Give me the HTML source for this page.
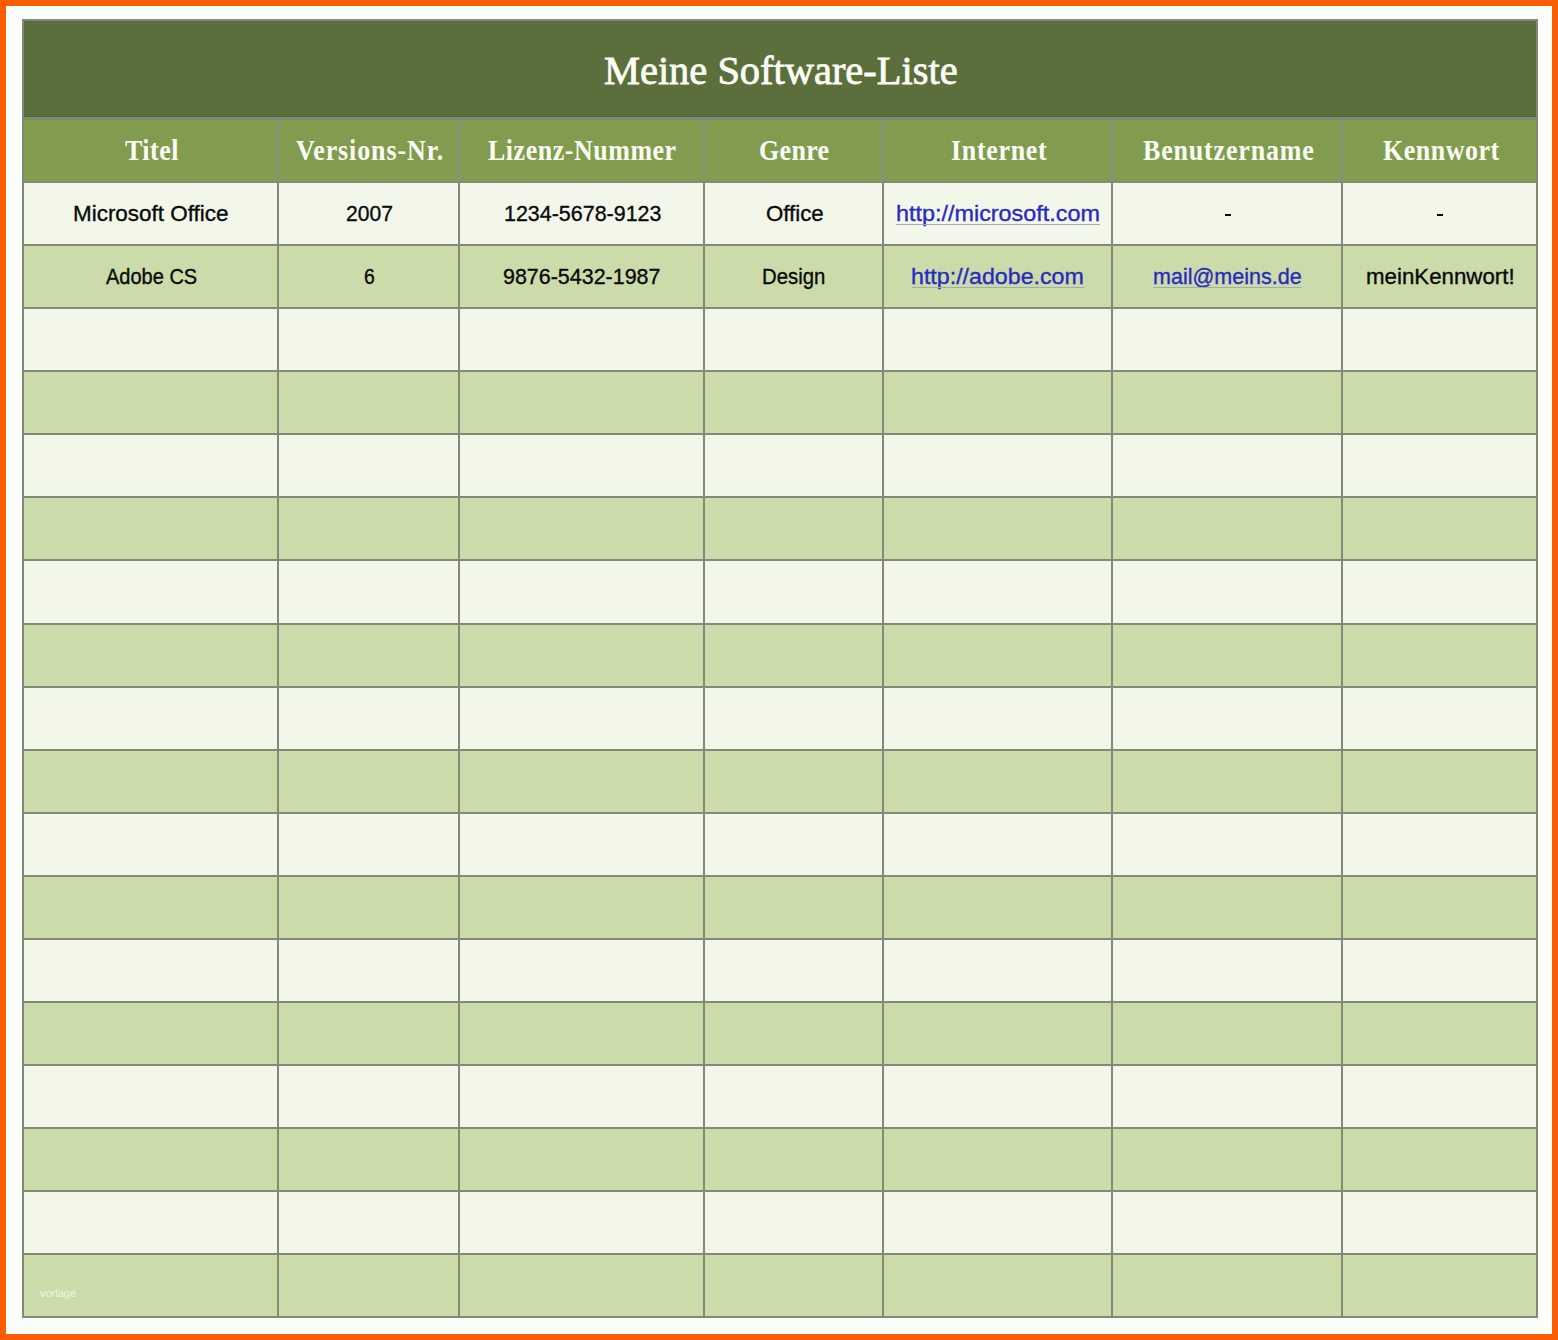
<!DOCTYPE html>
<html><head><meta charset="utf-8">
<style>
html,body{margin:0;padding:0;}
body{width:1558px;height:1340px;position:relative;overflow:hidden;background:#fb5d07;}
div{position:absolute;}
.tt{font-family:"Liberation Serif",serif;color:#fbfdf4;white-space:nowrap;transform-origin:0 0;-webkit-text-stroke:0.8px #fbfdf4;}
.ht{font-family:"Liberation Serif",serif;font-weight:bold;color:#fbfdf4;white-space:nowrap;transform-origin:0 0;-webkit-text-stroke:0px #fbfdf4;}
.dt,.dl{font-family:"Liberation Sans",sans-serif;color:#0a0a0a;white-space:nowrap;transform-origin:0 0;-webkit-text-stroke:0.35px currentColor;}
.dl{color:#2a2ac0;}
.u{position:absolute;height:1px;background:#a4abad;}
</style></head><body>

<div style="left:6px;top:6px;width:1546px;height:1328px;background:#fbfdf9"></div>
<div style="left:22px;top:19px;width:1516px;height:99px;background:#5b6f3d"></div>
<div style="left:22px;top:117px;width:1516px;height:65px;background:#819c4e"></div>
<div style="left:22px;top:181px;width:1516px;height:63px;background:#f2f7ea"></div>
<div style="left:22px;top:244px;width:1516px;height:63px;background:#cbdcaa"></div>
<div style="left:22px;top:307px;width:1516px;height:63px;background:#f2f7ea"></div>
<div style="left:22px;top:370px;width:1516px;height:63px;background:#cbdcaa"></div>
<div style="left:22px;top:433px;width:1516px;height:63px;background:#f2f7ea"></div>
<div style="left:22px;top:496px;width:1516px;height:63px;background:#cbdcaa"></div>
<div style="left:22px;top:559px;width:1516px;height:64px;background:#f2f7ea"></div>
<div style="left:22px;top:623px;width:1516px;height:63px;background:#cbdcaa"></div>
<div style="left:22px;top:686px;width:1516px;height:63px;background:#f2f7ea"></div>
<div style="left:22px;top:749px;width:1516px;height:63px;background:#cbdcaa"></div>
<div style="left:22px;top:812px;width:1516px;height:63px;background:#f2f7ea"></div>
<div style="left:22px;top:875px;width:1516px;height:63px;background:#cbdcaa"></div>
<div style="left:22px;top:938px;width:1516px;height:63px;background:#f2f7ea"></div>
<div style="left:22px;top:1001px;width:1516px;height:63px;background:#cbdcaa"></div>
<div style="left:22px;top:1064px;width:1516px;height:63px;background:#f2f7ea"></div>
<div style="left:22px;top:1127px;width:1516px;height:63px;background:#cbdcaa"></div>
<div style="left:22px;top:1190px;width:1516px;height:63px;background:#f2f7ea"></div>
<div style="left:22px;top:1253px;width:1516px;height:63px;background:#cbdcaa"></div>
<div style="left:22px;top:19px;width:1516px;height:2px;background:#838a78"></div>
<div style="left:24px;top:21px;width:1512px;height:1px;background:#5c6648"></div>
<div style="left:22px;top:116px;width:1516px;height:1px;background:#536049"></div>
<div style="left:22px;top:117px;width:1516px;height:3px;background:#808d6c"></div>
<div style="left:22px;top:181px;width:1516px;height:2px;background:#838a78"></div>
<div style="left:22px;top:244px;width:1516px;height:2px;background:#838a78"></div>
<div style="left:22px;top:307px;width:1516px;height:2px;background:#838a78"></div>
<div style="left:22px;top:370px;width:1516px;height:2px;background:#838a78"></div>
<div style="left:22px;top:433px;width:1516px;height:2px;background:#838a78"></div>
<div style="left:22px;top:496px;width:1516px;height:2px;background:#838a78"></div>
<div style="left:22px;top:559px;width:1516px;height:2px;background:#838a78"></div>
<div style="left:22px;top:623px;width:1516px;height:2px;background:#838a78"></div>
<div style="left:22px;top:686px;width:1516px;height:2px;background:#838a78"></div>
<div style="left:22px;top:749px;width:1516px;height:2px;background:#838a78"></div>
<div style="left:22px;top:812px;width:1516px;height:2px;background:#838a78"></div>
<div style="left:22px;top:875px;width:1516px;height:2px;background:#838a78"></div>
<div style="left:22px;top:938px;width:1516px;height:2px;background:#838a78"></div>
<div style="left:22px;top:1001px;width:1516px;height:2px;background:#838a78"></div>
<div style="left:22px;top:1064px;width:1516px;height:2px;background:#838a78"></div>
<div style="left:22px;top:1127px;width:1516px;height:2px;background:#838a78"></div>
<div style="left:22px;top:1190px;width:1516px;height:2px;background:#838a78"></div>
<div style="left:22px;top:1253px;width:1516px;height:2px;background:#838a78"></div>
<div style="left:22px;top:1316px;width:1516px;height:2px;background:#838a78"></div>
<div style="left:22px;top:19px;width:2px;height:1299px;background:#838a78"></div>
<div style="left:275px;top:120px;width:6px;height:61px;background:linear-gradient(to right, rgba(132,147,115,0), #86946e 30%, #86946e 70%, rgba(132,147,115,0))"></div>
<div style="left:277px;top:181px;width:2px;height:1137px;background:#838a78"></div>
<div style="left:456px;top:120px;width:6px;height:61px;background:linear-gradient(to right, rgba(132,147,115,0), #86946e 30%, #86946e 70%, rgba(132,147,115,0))"></div>
<div style="left:458px;top:181px;width:2px;height:1137px;background:#838a78"></div>
<div style="left:701px;top:120px;width:6px;height:61px;background:linear-gradient(to right, rgba(132,147,115,0), #86946e 30%, #86946e 70%, rgba(132,147,115,0))"></div>
<div style="left:703px;top:181px;width:2px;height:1137px;background:#838a78"></div>
<div style="left:880px;top:120px;width:6px;height:61px;background:linear-gradient(to right, rgba(132,147,115,0), #86946e 30%, #86946e 70%, rgba(132,147,115,0))"></div>
<div style="left:882px;top:181px;width:2px;height:1137px;background:#838a78"></div>
<div style="left:1109px;top:120px;width:6px;height:61px;background:linear-gradient(to right, rgba(132,147,115,0), #86946e 30%, #86946e 70%, rgba(132,147,115,0))"></div>
<div style="left:1111px;top:181px;width:2px;height:1137px;background:#838a78"></div>
<div style="left:1339px;top:120px;width:6px;height:61px;background:linear-gradient(to right, rgba(132,147,115,0), #86946e 30%, #86946e 70%, rgba(132,147,115,0))"></div>
<div style="left:1341px;top:181px;width:2px;height:1137px;background:#838a78"></div>
<div style="left:1536px;top:19px;width:2px;height:1299px;background:#838a78"></div>
<div id="t0" class="tt" style="left:604.00px;top:50.00px;font-size:41px;line-height:41px;letter-spacing:0.000px;transform:scaleX(0.9860)"><span>Meine Software-Liste</span><i style="display:inline-block;width:0;height:0"></i></div>
<div id="h0" class="ht" style="left:125.00px;top:136.00px;font-size:29.5px;line-height:29.5px;letter-spacing:0.555px;transform:scaleX(0.8800)"><span>Titel</span><i style="display:inline-block;width:0;height:0"></i></div>
<div id="h1" class="ht" style="left:296.00px;top:136.00px;font-size:29.5px;line-height:29.5px;letter-spacing:1.023px;transform:scaleX(0.8800)"><span>Versions-Nr.</span><i style="display:inline-block;width:0;height:0"></i></div>
<div id="h2" class="ht" style="left:488.00px;top:136.00px;font-size:29.5px;line-height:29.5px;letter-spacing:0.614px;transform:scaleX(0.8800)"><span>Lizenz-Nummer</span><i style="display:inline-block;width:0;height:0"></i></div>
<div id="h3" class="ht" style="left:759.00px;top:136.00px;font-size:29.5px;line-height:29.5px;letter-spacing:0.377px;transform:scaleX(0.8800)"><span>Genre</span><i style="display:inline-block;width:0;height:0"></i></div>
<div id="h4" class="ht" style="left:950.50px;top:136.00px;font-size:29.5px;line-height:29.5px;letter-spacing:0.789px;transform:scaleX(0.8800)"><span>Internet</span><i style="display:inline-block;width:0;height:0"></i></div>
<div id="h5" class="ht" style="left:1142.50px;top:136.00px;font-size:29.5px;line-height:29.5px;letter-spacing:0.954px;transform:scaleX(0.8800)"><span>Benutzername</span><i style="display:inline-block;width:0;height:0"></i></div>
<div id="h6" class="ht" style="left:1383.00px;top:136.00px;font-size:29.5px;line-height:29.5px;letter-spacing:0.596px;transform:scaleX(0.8800)"><span>Kennwort</span><i style="display:inline-block;width:0;height:0"></i></div>
<div id="d00" class="dt" style="left:73.00px;top:203.00px;font-size:22px;line-height:22px;letter-spacing:0.000px;transform:scaleX(1.0200)"><span>Microsoft Office</span><i style="display:inline-block;width:0;height:0"></i></div>
<div id="d01" class="dt" style="left:346.00px;top:203.00px;font-size:22px;line-height:22px;letter-spacing:0.000px;transform:scaleX(0.9574)"><span>2007</span><i style="display:inline-block;width:0;height:0"></i></div>
<div id="d02" class="dt" style="left:503.50px;top:203.00px;font-size:22px;line-height:22px;letter-spacing:0.000px;transform:scaleX(0.9750)"><span>1234-5678-9123</span><i style="display:inline-block;width:0;height:0"></i></div>
<div id="d03" class="dt" style="left:766.00px;top:203.00px;font-size:22px;line-height:22px;letter-spacing:0.000px;transform:scaleX(1.0118)"><span>Office</span><i style="display:inline-block;width:0;height:0"></i></div>
<div id="d04" class="dl" style="left:896.00px;top:203.00px;font-size:22px;line-height:22px;letter-spacing:0.000px;transform:scaleX(1.0625)"><span>http://microsoft.com</span><i style="display:inline-block;width:0;height:0"></i></div>
<div id="d10" class="dt" style="left:106.00px;top:266.00px;font-size:22px;line-height:22px;letter-spacing:0.000px;transform:scaleX(0.9094)"><span>Adobe CS</span><i style="display:inline-block;width:0;height:0"></i></div>
<div id="d11" class="dt" style="left:364.00px;top:266.00px;font-size:22px;line-height:22px;letter-spacing:0.000px;transform:scaleX(0.8809)"><span>6</span><i style="display:inline-block;width:0;height:0"></i></div>
<div id="d12" class="dt" style="left:503.00px;top:266.00px;font-size:22px;line-height:22px;letter-spacing:0.000px;transform:scaleX(0.9750)"><span>9876-5432-1987</span><i style="display:inline-block;width:0;height:0"></i></div>
<div id="d13" class="dt" style="left:762.00px;top:266.00px;font-size:22px;line-height:22px;letter-spacing:0.000px;transform:scaleX(0.9242)"><span>Design</span><i style="display:inline-block;width:0;height:0"></i></div>
<div id="d14" class="dl" style="left:911.00px;top:266.00px;font-size:22px;line-height:22px;letter-spacing:0.000px;transform:scaleX(1.0544)"><span>http://adobe.com</span><i style="display:inline-block;width:0;height:0"></i></div>
<div id="d15" class="dl" style="left:1153.00px;top:266.00px;font-size:22px;line-height:22px;letter-spacing:0.000px;transform:scaleX(0.9788)"><span>mail@meins.de</span><i style="display:inline-block;width:0;height:0"></i></div>
<div id="d16" class="dt" style="left:1365.50px;top:266.00px;font-size:22px;line-height:22px;letter-spacing:0.000px;transform:scaleX(1.0126)"><span>meinKennwort!</span><i style="display:inline-block;width:0;height:0"></i></div>
<div style="left:1225px;top:214px;width:6px;height:2px;background:#0a0a0a"></div>
<div style="left:1437px;top:214px;width:6px;height:2px;background:#0a0a0a"></div>
<div class="u" style="left:896px;top:224px;width:204px"></div>
<div class="u" style="left:912px;top:287px;width:172px"></div>
<div class="u" style="left:1153px;top:287px;width:149px"></div>
<div style="left:40px;top:1286px;font-family:Liberation Sans,sans-serif;font-size:11px;line-height:14px;color:#eef6e4">vorlage</div>
</body></html>
